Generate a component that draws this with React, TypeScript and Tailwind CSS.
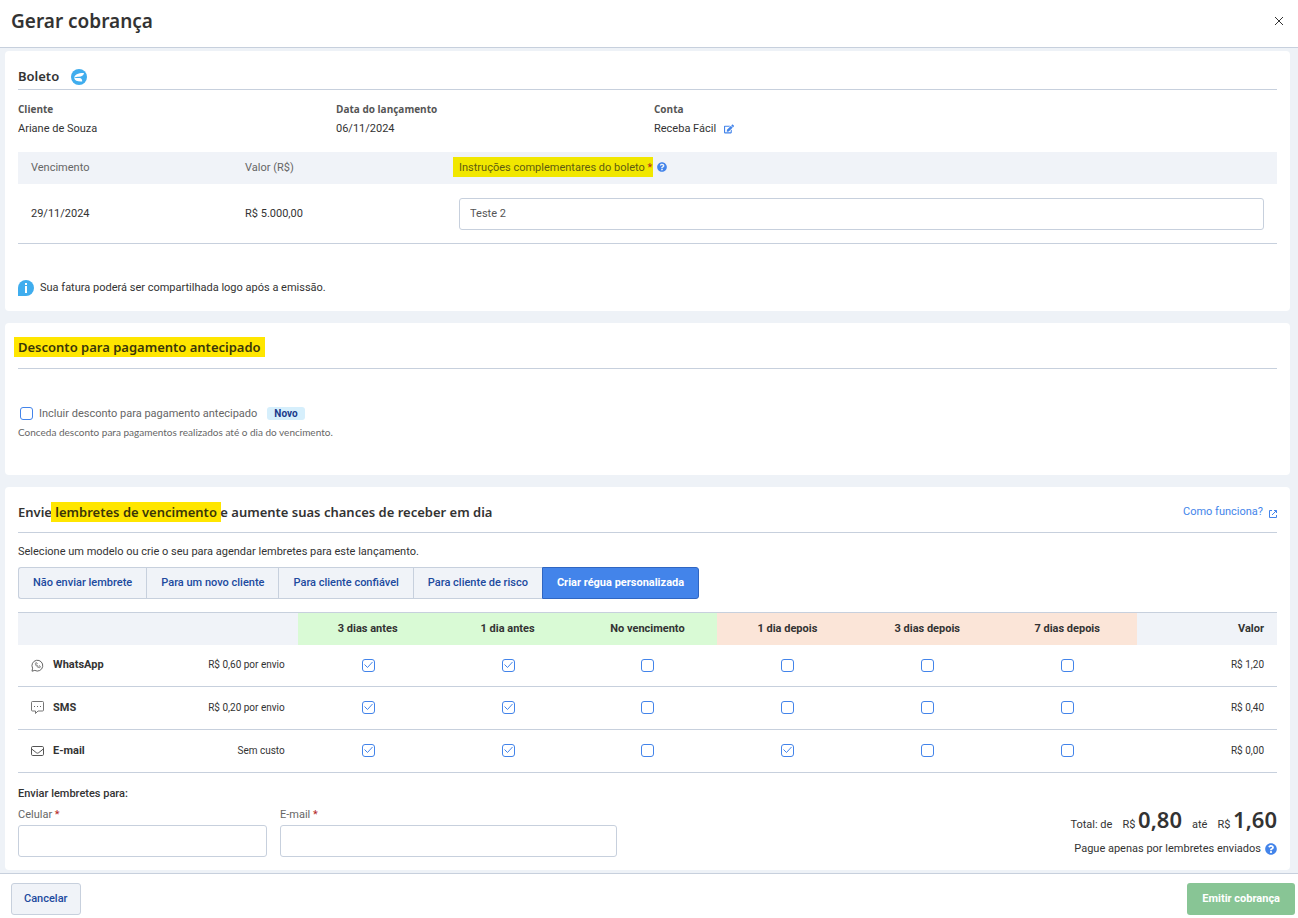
import type { ReactNode } from "react";
import { FaEdit, FaQuestionCircle } from "react-icons/fa";

const models = [
    { name: "Não enviar lembrete", active: false },
    { name: "Para um novo cliente", active: false },
    { name: "Para cliente confiável", active: false },
    { name: "Para cliente de risco", active: false },
    { name: "Criar régua personalizada", active: true },
];

const periods = [
    { name: "3 dias antes", late: false },
    { name: "1 dia antes", late: false },
    { name: "No vencimento", late: false },
    { name: "1 dia depois", late: true },
    { name: "3 dias depois", late: true },
    { name: "7 dias depois", late: true },
];

const channels = [
    { name: "WhatsApp", icon: <WhatsAppIcon />, price: "R$ 0,60 por envio", checked: [true, true, false, false, false, false], total: "R$ 1,20" },
    { name: "SMS", icon: <SmsIcon />, price: "R$ 0,20 por envio", checked: [true, true, false, false, false, false], total: "R$ 0,40" },
    { name: "E-mail", icon: <MailIcon />, price: "Sem custo", checked: [true, true, false, true, false, false], total: "R$ 0,00" },
];

function WhatsAppIcon() {
    return (
        <svg viewBox="0 0 13 13" className="size-[13px]" fill="none" stroke="#555" strokeLinejoin="round" aria-hidden="true">
            <path d="M1.600 9.200A5.400 5.400 0 1 1 3.800 11.400L1 12.200Z" strokeWidth=".9" />
            <path d="M4.700 3.800c-.9.9 0 2.500 1 3.500s2.600 1.900 3.500 1l.1-.9-1.300-.7-.7.7C6.500 7 6 6.500 5.600 5.700l.7-.7-.7-1.300Z" strokeWidth=".7" />
        </svg>
    );
}

function SmsIcon() {
    return (
        <svg viewBox="0 0 13 13" className="size-[13px]" fill="none" stroke="#666" aria-hidden="true">
            <path d="M.5 1.500a1 1 0 0 1 1-1h10a1 1 0 0 1 1 1v7.500a1 1 0 0 1-1 1H7L4.500 12.500V10h-3a1 1 0 0 1-1-1Z" strokeWidth=".9" />
            <path d="M3 5.500h1M6 5.500h1M9 5.500h1" />
        </svg>
    );
}

function MailIcon() {
    return (
        <svg viewBox="0 0 13 13" className="size-[13px]" fill="none" stroke="#555" aria-hidden="true">
            <rect x=".5" y="2.500" width="12" height="9" rx="1.200" />
            <path d="M.7 5 5.300 8.700a2 2 0 0 0 2.400 0L12.300 5" />
        </svg>
    );
}

function BoletoIcon() {
    return (
        <svg viewBox="0 0 16 16" className="size-4" aria-hidden="true">
            <circle cx="8" cy="8" r="8" fill="#3fadee" />
            <path d="M3.200 9C3.600 5.600 7 3.900 13 4 12.600 6.500 10.500 7.700 8 7.800 6 7.800 4.600 8 3.200 9Z" fill="#fff" />
            <path d="M3.200 9h5.400c1.800.1 2.600 1.400 2.600 3.500C7 12.800 3.800 12 3.200 9Z" fill="#fff" />
        </svg>
    );
}

function InfoIcon() {
    return (
        <svg viewBox="0 0 16 16" className="size-4" aria-hidden="true">
            <path d="M8 0a8 8 0 1 1 0 16H0V8a8 8 0 0 1 8-8Z" fill="#3fadee" />
            <path d="M7 3h2v2H7ZM7 6h2v7H7Z" fill="#fff" />
        </svg>
    );
}

function ExternalIcon() {
    return (
        <svg viewBox="0 0 8 8" className="mt-1 size-2" fill="none" stroke="currentColor" aria-hidden="true">
            <path d="M3 .5H.5v7h7V5M5 .5h2.500V3M7.500.5 3 5" />
        </svg>
    );
}

function Card({ children }: { children: ReactNode }) {
    return <section className="rounded bg-white px-[13px]">{children}</section>;
}

function Mark({ children }: { children: ReactNode }) {
    return <mark className="-mx-1 inline-block bg-[#ffe600] px-1 py-[2px] text-[#3a3608]">{children}</mark>;
}

function Checkbox({ label, id, checked = false }: { label?: string; id?: string; checked?: boolean }) {
    return (
        <span className="inline-grid place-items-center align-middle text-[#4384ea]">
            <input
                id={id}
                type="checkbox"
                aria-label={label}
                defaultChecked={checked}
                className="peer col-start-1 row-start-1 size-[13px] appearance-none rounded-[3px] border border-current bg-white"
            />
            <svg viewBox="0 0 13 13" className="pointer-events-none invisible col-start-1 row-start-1 size-[13px] peer-checked:visible" fill="none" stroke="currentColor" aria-hidden="true">
                <path d="M2.500 5.500 5.500 8.500 10.500 3" />
            </svg>
        </span>
    );
}

function Detail({ label, children }: { label: string; children: ReactNode }) {
    return (
        <div>
            <dt className="font-['Open_Sans',sans-serif] text-[10px] leading-5 font-bold text-[#555]">{label}</dt>
            <dd className="flex items-center gap-2 leading-5">{children}</dd>
        </div>
    );
}

export default function App() {
    return (
        <div className="flex min-h-screen flex-col bg-[#eef2f7] font-['Roboto','Noto_Sans',sans-serif] text-[11px] leading-4 text-[#333]">
            <header className="flex h-12 items-center justify-between border-b border-[#c7d0dd] bg-white pr-[14px] pb-[6px] pl-[11px]">
                <h1 className="font-['Noto_Sans',sans-serif] text-[19px] leading-7 font-semibold">Gerar cobrança</h1>
                <button type="button" aria-label="Fechar" className="text-[#333]">
                    <svg viewBox="0 0 10 10" className="size-[10px]" fill="none" stroke="currentColor" aria-hidden="true">
                        <path d="M1 1 9 9M9 1 1 9" />
                    </svg>
                </button>
            </header>

            <main className="flex grow flex-col gap-[12px] pt-[3px] pr-2 pb-[3px] pl-[5px]">
                <Card>
                    <h2 className="flex h-[39px] items-end gap-3 border-b border-[#c7d0dd] pb-1 font-['Noto_Sans',sans-serif] text-[13px] leading-[18px] font-semibold">
                        Boleto <BoletoIcon />
                    </h2>
                    <dl className="grid grid-cols-4 gap-[13px] pt-[9px] pb-[13px]">
                        <Detail label="Cliente">Ariane de Souza</Detail>
                        <Detail label="Data do lançamento">06/11/2024</Detail>
                        <Detail label="Conta">
                            Receba Fácil
                            <button type="button" aria-label="Editar conta" className="text-[#4384ea]">
                                <FaEdit className="size-[10px]" />
                            </button>
                        </Detail>
                    </dl>
                    <table className="w-full table-fixed border-b border-[#c7d0dd] text-left">
                        <thead className="bg-[#f0f3f8] text-[#666]">
                            <tr className="h-8">
                                <th className="w-[17%] px-[13px] font-normal">Vencimento</th>
                                <th className="w-[17%] px-[13px] font-normal">Valor (R$)</th>
                                <th className="px-[13px] font-normal">
                                    <span className="flex items-center gap-1 pb-[3px]">
                                        <label htmlFor="instrucoes">
                                            <mark className="-ml-[6px] inline-block bg-[#f1e700] pt-[3px] pr-px pb-px pl-[6px] text-[#5f5c10]">
                                                Instruções complementares do boleto <span className="text-[#b3261e]">*</span>
                                            </mark>
                                        </label>
                                        <FaQuestionCircle className="size-[10px] text-[#4384ea]" />
                                    </span>
                                </th>
                            </tr>
                        </thead>
                        <tbody>
                            <tr className="h-[59px]">
                                <td className="px-[13px] pt-px">29/11/2024</td>
                                <td className="px-[13px] pt-px">R$ 5.000,00</td>
                                <td className="px-[13px] pt-px">
                                    <input id="instrucoes" type="text" defaultValue="Teste 2" className="block h-8 w-full rounded-[3px] border border-[#c7d0dd] px-[10px] text-[#555]" />
                                </td>
                            </tr>
                        </tbody>
                    </table>
                    <p className="flex items-center gap-[6px] pt-9 pb-[15px]">
                        <InfoIcon /> Sua fatura poderá ser compartilhada logo após a emissão.
                    </p>
                </Card>

                <Card>
                    <h2 className="flex h-[46px] items-center border-b border-[#c7d0dd] pt-1 font-['Noto_Sans',sans-serif] text-[13px] leading-4 font-semibold">
                        <span>
                            <Mark>Desconto para pagamento antecipado</Mark>
                        </span>
                    </h2>
                    <div className="pt-[37px] pb-[35px]">
                        <div className="flex items-center gap-[6px] pl-[2px]">
                            <Checkbox id="desconto" />
                            <label htmlFor="desconto" className="text-[#666]">
                                Incluir desconto para pagamento antecipado
                            </label>
                            <span className="ml-1 rounded-[3px] bg-[#d6effc] px-[7px] text-[10px] leading-[13px] font-bold text-[#1a3a8a]">Novo</span>
                        </div>
                        <p className="pt-[2px] font-['Lato',sans-serif] text-[10px] text-[#666]">Conceda desconto para pagamentos realizados até o dia do vencimento.</p>
                    </div>
                </Card>

                <Card>
                    <div className="flex h-[46px] items-center justify-between border-b border-[#c7d0dd] pt-[6px]">
                        <h2 className="font-['Noto_Sans',sans-serif] text-[13px] leading-4 font-semibold">
                            Envie <Mark>lembretes de vencimento</Mark> e aumente suas chances de receber em dia
                        </h2>
                        <a href="#" className="flex items-center gap-[6px] text-[#4384ea]">
                            Como funciona? <ExternalIcon />
                        </a>
                    </div>
                    <p className="pt-[11px] pb-[7px]">Selecione um modelo ou crie o seu para agendar lembretes para este lançamento.</p>
                    <div className="flex">
                        {models.map((model) => (
                            <button
                                key={model.name}
                                type="button"
                                className={
                                    model.active
                                        ? "h-8 rounded-r-[3px] border border-[#2f66c2] bg-[#4384ea] px-[14px] font-bold text-white"
                                        : "h-8 border border-r-0 border-[#c7d0dd] bg-[#f0f3f8] px-[14px] font-medium text-[#204a9e] first:rounded-l-[3px]"
                                }
                            >
                                {model.name}
                            </button>
                        ))}
                    </div>
                    <table className="mt-[13px] w-full table-fixed border-t border-[#c7d0dd]">
                        <thead className="bg-[#f0f3f8]">
                            <tr className="h-[33px]">
                                <td colSpan={2} className="w-2/9" />
                                {periods.map((period) => (
                                    <th key={period.name} className={period.late ? "bg-[#fbe5d8] font-bold" : "bg-[#d9fad5] font-bold"}>
                                        {period.name}
                                    </th>
                                ))}
                                <th className="px-[13px] text-right font-bold">Valor</th>
                            </tr>
                        </thead>
                        <tbody>
                            {channels.map((channel) => (
                                <tr key={channel.name} className="h-[43px] border-b border-[#c7d0dd] first:h-[41px]">
                                    <th className="pl-[13px] font-bold">
                                        <span className="flex items-center gap-[9px]">
                                            {channel.icon}
                                            {channel.name}
                                        </span>
                                    </th>
                                    <td className="pr-[13px] text-right text-[10px]">{channel.price}</td>
                                    {channel.checked.map((checked, i) => (
                                        <td key={periods[i].name} className="pl-px text-center">
                                            <Checkbox label={`${channel.name} ${periods[i].name}`} checked={checked} />
                                        </td>
                                    ))}
                                    <td className="pr-[13px] text-right text-[10px]">{channel.total}</td>
                                </tr>
                            ))}
                        </tbody>
                    </table>
                    <div className="grid grid-cols-[249fr_337fr_647fr] gap-x-[13px] py-[13px]">
                        <p className="col-span-3 pb-[5px] font-medium">Enviar lembretes para:</p>
                        <label className="text-[#666]">
                            Celular <span className="text-[#b3261e]">*</span>
                            <input type="tel" className="mt-[2px] block h-8 w-full rounded-[3px] border border-[#c7d0dd] px-[10px]" />
                        </label>
                        <label className="text-[#666]">
                            E-mail <span className="text-[#b3261e]">*</span>
                            <input type="email" className="mt-[2px] block h-8 w-full rounded-[3px] border border-[#c7d0dd] px-[10px]" />
                        </label>
                        <div className="text-right">
                            <p className="flex items-baseline justify-end gap-[10px] leading-6">
                                <span>Total: de</span>
                                <span>
                                    R$ <strong className="font-['Noto_Sans',sans-serif] text-[22px] font-semibold">0,80</strong>
                                </span>
                                <span>até</span>
                                <span>
                                    R$ <strong className="font-['Noto_Sans',sans-serif] text-[22px] font-semibold">1,60</strong>
                                </span>
                            </p>
                            <p className="flex items-center justify-end gap-1 pt-1">
                                Pague apenas por lembretes enviados <FaQuestionCircle className="size-3 text-[#4384ea]" />
                            </p>
                        </div>
                    </div>
                </Card>
            </main>

            <footer className="flex h-[45px] items-center justify-between border-t border-[#c7d0dd] bg-white pt-[6px] pr-[3px] pl-[11px]">
                <button type="button" className="h-8 rounded-[3px] border border-[#c7d0dd] bg-[#f0f3f8] px-3 font-medium text-[#204a9e]">
                    Cancelar
                </button>
                <button type="button" className="h-8 rounded-[3px] bg-[#88c595] px-[15px] font-bold text-white">
                    Emitir cobrança
                </button>
            </footer>
        </div>
    );
}
